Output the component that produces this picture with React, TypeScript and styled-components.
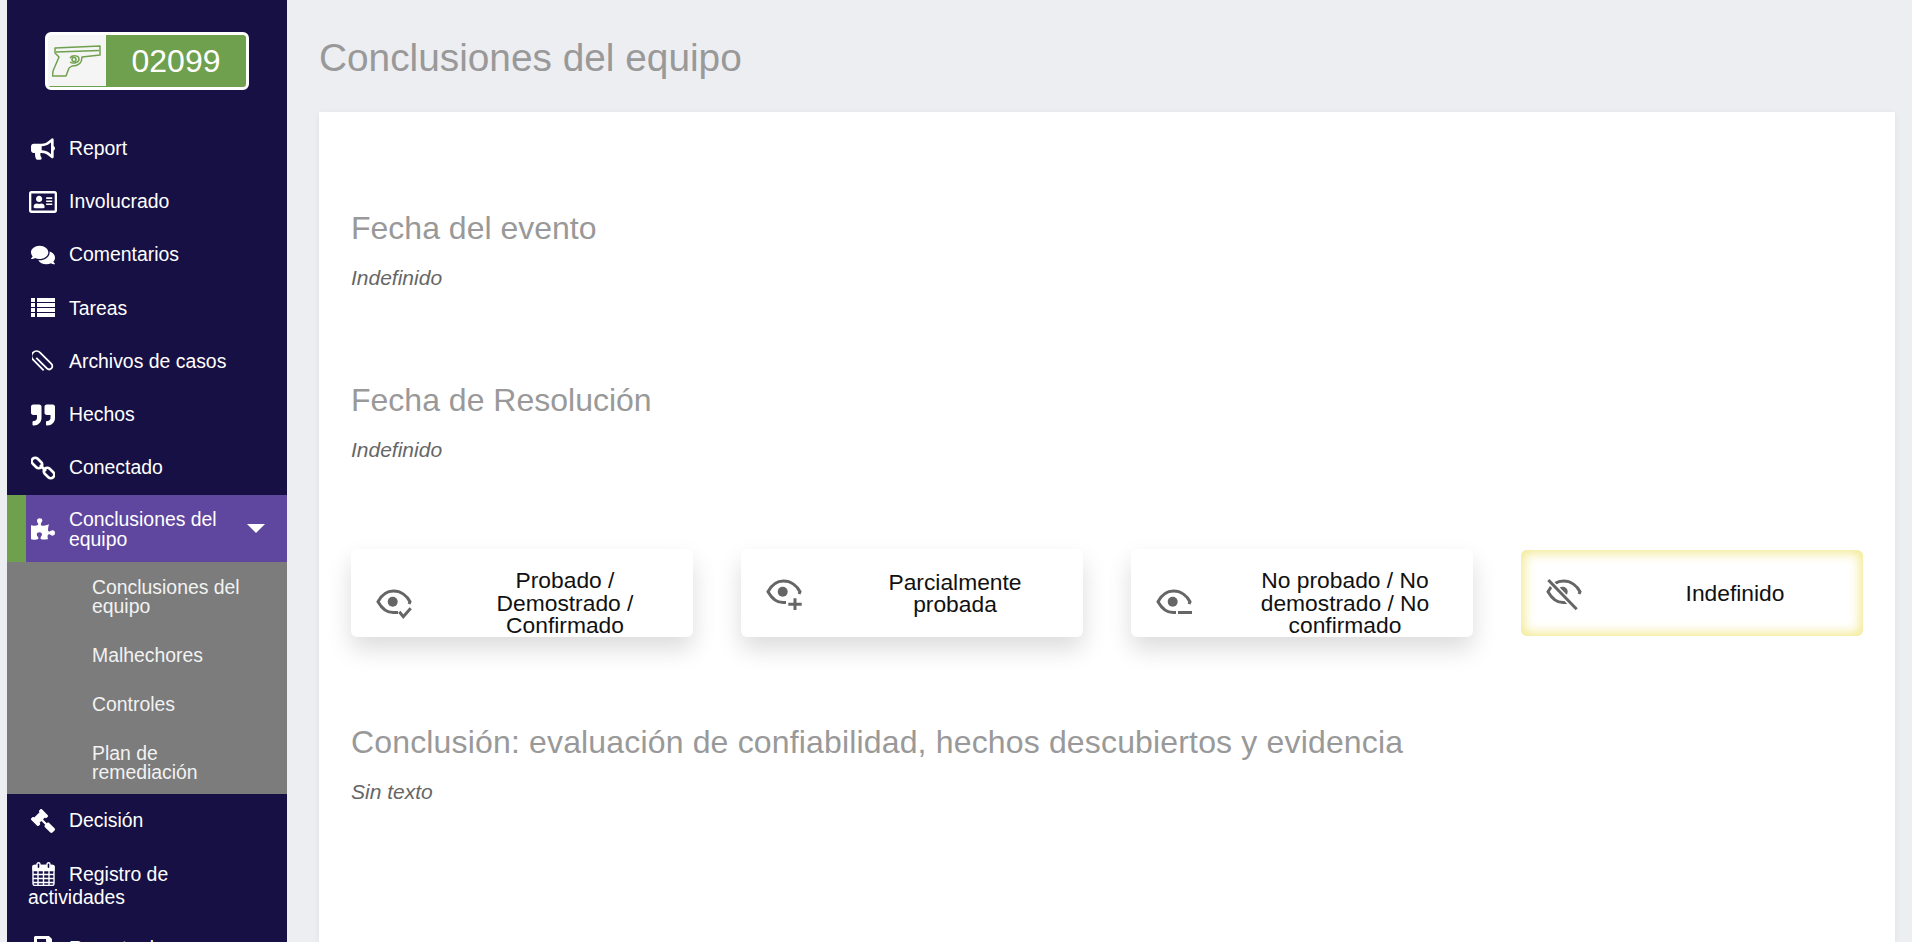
import React from "react";
import styled, { createGlobalStyle } from "styled-components";
import { FaBullhorn, FaRegAddressCard, FaComments, FaQuoteRight, FaPuzzlePiece, FaGavel, FaPrint } from "react-icons/fa";

const Global = createGlobalStyle`
  html, body { margin: 0; padding: 0; height: 942px; overflow: hidden; background: #edeef2; }
  * { box-sizing: border-box; }
  body { font-family: "Liberation Sans", Arial, sans-serif; }
`;

const Page = styled.div`
  display: flex;
  height: 942px;
  overflow: hidden;
  padding-left: 7px;
  background: #edeef2;
`;
const Sidebar = styled.nav`
  flex: 0 0 280px;
  height: 942px;
  overflow: hidden;
  background: #171044;
  padding-top: 32px;
`;
const Badge = styled.div`
  display: flex;
  width: 204px;
  height: 58px;
  margin: 0 0 32px 38px;
  border: 3px solid #fff;
  border-radius: 6px;
  overflow: hidden;
  background: #f5f5f5;
`;
const BadgeGun = styled.div`
  flex: 0 0 58px;
  display: flex;
  align-items: center;
  justify-content: center;
  border-bottom: 1px solid #6fa04e;
`;
const BadgeNum = styled.div`
  flex: 1;
  background: #6fa04e;
  color: #fff;
  font-size: 32px;
  display: flex;
  align-items: center;
  justify-content: center;
`;
const Item = styled.div`
  display: flex;
  align-items: center;
  height: 53.2px;
  padding-left: 21px;
  color: #fff;
  font-size: 19.4px;
`;
const IconSlot = styled.span`
  flex: 0 0 41px;
  display: flex;
`;
const IconBox = styled.span<{ $flip?: boolean }>`
  width: 30px;
  display: flex;
  justify-content: center;
  align-items: center;
  font-size: 24px;
  transform: ${(p) => (p.$flip ? "scaleX(-1)" : "none")};
`;
const ActiveItem = styled.div`
  display: flex;
  align-items: center;
  height: 67px;
  margin-top: 1px;
  background: #5f469f;
  border-left: 19px solid #6fa04e;
  padding-left: 2px;
  color: #fff;
  font-size: 19.4px;
  line-height: 20px;
`;
const ActiveLabel = styled.span`
  flex: 1;
  padding-right: 20px;
`;
const Caret = styled.span`
  width: 0;
  height: 0;
  border-left: 9px solid transparent;
  border-right: 9px solid transparent;
  border-top: 9px solid #fff;
  margin-right: 22px;
`;
const SubMenu = styled.div`
  background: #7c7c7c;
  height: 232px;
  padding: 16px 40px 0 85px;
  display: flex;
  flex-direction: column;
  gap: 30px;
  color: #f2f2f2;
  font-size: 19.4px;
  line-height: 19px;
`;
const SubItem = styled.div``;
const WrapItem = styled.div`
  padding: 14px 60px 0 21px;
  color: #fff;
  font-size: 19.4px;
  line-height: 22px;
  height: 74px;
`;
const InlineIcon = styled.span`
  display: inline-block;
  width: 41px;
  vertical-align: -5px;
`;
const Main = styled.main`
  flex: 1;
  padding: 0 17px 0 32px;
  min-width: 0;
`;
const Title = styled.h1`
  margin: 0;
  height: 112px;
  padding-top: 36px;
  font-size: 38.8px;
  line-height: 44px;
  font-weight: 400;
  color: #999;
`;
const Card = styled.section`
  background: #fff;
  height: 830px;
  padding: 97px 32px 0;
  box-shadow: 0 1px 6px rgba(0,0,0,.06);
`;
const Heading = styled.h2`
  margin: 0;
  font-size: 32px;
  line-height: 38px;
  font-weight: 400;
  color: #999;
`;
const LongHeading = styled(Heading)`
  letter-spacing: 0.16px;
`;
const Note = styled.p`
  margin: 18px 0 0;
  font-size: 21px;
  line-height: 26px;
  font-style: italic;
  color: #666;
`;
const Block = styled.div`
  height: 172px;
`;
const Choices = styled.div`
  display: grid;
  grid-template-columns: repeat(4, 1fr);
  gap: 48px;
  margin-top: -4px;
  margin-bottom: 86px;
`;
const Choice = styled.div<{ $tall?: boolean; $active?: boolean }>`
  height: ${(p) => (p.$active ? "86px" : "88px")};
  margin: ${(p) => (p.$active ? "1px 0" : "0")};
  border-radius: 6px;
  background: #fff;
  display: flex;
  align-items: center;
  padding-top: ${(p) => (p.$tall ? "20px" : "0")};
  overflow: ${(p) => (p.$tall ? "visible" : "hidden")};
  box-shadow: ${(p) => (p.$active ? "inset 0 0 12px 3px #f2e98e" : "0 12px 24px rgba(0,0,0,.14)")};
`;
const ChoiceIcon = styled.span`
  flex: 0 0 86px;
  display: flex;
  padding-left: 25px;
`;
const ChoiceText = styled.span`
  flex: 1;
  padding: 0 30px;
  text-align: center;
  font-size: 22.8px;
  line-height: 22.5px;
  color: #111;
`;

const Eye = ({ children, tail = 22 }: { children?: React.ReactNode; tail?: number }) => (
  <svg width="36" height="30" viewBox="0 0 36 30" fill="none" stroke="#666" strokeWidth="3" style={{ overflow: "visible" }}>
    <path d={`M${tail} 24.5 H17 C10 24.5 5 19 2 13.7 C5 8 10 3 17.5 3 C25 3 31 8 34 13.7 L33 16`} />
    <circle cx="16.7" cy="13.7" r="5" fill="#666" stroke="none" />
    {children}
  </svg>
);

const Gun = () => (
  <svg width="50" height="32" viewBox="0 0 50 32" fill="none" stroke="#6fa04e" strokeWidth="1.5" strokeLinejoin="round">
    <path d="M3 3 L48 1 V10 L30 12 C30 18 26 21 20 21 L17 23 L14 31 L0.5 31 L1 26 L7 12 L3 8 Z" />
    <path d="M4 7 L47 5.5 M18 13 C20 10 27 10 27 14 C27 18 21 19 18 17" />
    <circle cx="22" cy="14.5" r="2" />
  </svg>
);

const ListIcon = () => (
  <svg width="24" height="20" viewBox="0 0 24 20" fill="#fff">
    {[0, 5, 10, 15].map((y) => (
      <g key={y}>
        <rect x="0" y={y} width="4" height="4" />
        <rect x="6" y={y} width="18" height="4" />
      </g>
    ))}
  </svg>
);
const ClipIcon = () => (
  <svg width="22" height="22" viewBox="0 0 22 22" fill="none" stroke="#fff" strokeWidth="1.8">
    <path transform="rotate(-45 11 11)" d="M8.5 4 V19 a3.2 3.2 0 0 0 6.4 0 V3 a5 5 0 0 0 -10 0 V18" />
  </svg>
);
const LinkIcon = () => (
  <svg width="24" height="24" viewBox="0 0 24 24" fill="none" stroke="#fff" strokeWidth="2.6">
    <rect x="2.5" y="1" width="7" height="12" rx="3.5" transform="rotate(-45 6 7)" />
    <rect x="14.5" y="11" width="7" height="12" rx="3.5" transform="rotate(-45 18 17)" />
    <path d="M9 9 L15 15" />
  </svg>
);
const CalendarIcon = () => (
  <svg width="23" height="24" viewBox="0 0 23 24" fill="none" stroke="#fff" strokeWidth="1.4">
    <rect x="1" y="3.5" width="21" height="20" rx="2" />
    <rect x="1" y="3.5" width="21" height="5" rx="1" fill="#fff" />
    <path d="M1 12.5 H22 M1 16.5 H22 M1 20.5 H22 M6 9 V23 M11.5 9 V23 M17 9 V23" />
    <rect x="5" y="0.7" width="3" height="6" rx="1.5" fill="#171044" stroke="#fff" />
    <rect x="15" y="0.7" width="3" height="6" rx="1.5" fill="#171044" stroke="#fff" />
  </svg>
);

const items: [string, React.ReactNode][] = [
  ["Report", <FaBullhorn />],
  ["Involucrado", <FaRegAddressCard size={28} />],
  ["Comentarios", <FaComments />],
  ["Tareas", <ListIcon />],
  ["Archivos de casos", <ClipIcon />],
  ["Hechos", <FaQuoteRight />],
  ["Conectado", <LinkIcon />],
];

export default function App() {
  return (
    <Page>
      <Global />
      <Sidebar>
        <Badge>
          <BadgeGun><Gun /></BadgeGun>
          <BadgeNum>02099</BadgeNum>
        </Badge>
        {items.map(([label, icon]) => (
          <Item key={label}><IconSlot><IconBox>{icon}</IconBox></IconSlot>{label}</Item>
        ))}
        <ActiveItem>
          <IconSlot><IconBox><FaPuzzlePiece /></IconBox></IconSlot>
          <ActiveLabel>Conclusiones del equipo</ActiveLabel>
          <Caret />
        </ActiveItem>
        <SubMenu>
          <SubItem>Conclusiones del equipo</SubItem>
          <SubItem>Malhechores</SubItem>
          <SubItem>Controles</SubItem>
          <SubItem>Plan de remediación</SubItem>
        </SubMenu>
        <Item><IconSlot><IconBox $flip><FaGavel /></IconBox></IconSlot>Decisión</Item>
        <WrapItem><InlineIcon><IconBox><CalendarIcon /></IconBox></InlineIcon>Registro de actividades</WrapItem>
        <Item><IconSlot><IconBox><FaPrint /></IconBox></IconSlot>Reporte de un caso</Item>
      </Sidebar>
      <Main>
        <Title>Conclusiones del equipo</Title>
        <Card>
          <Block>
            <Heading>Fecha del evento</Heading>
            <Note>Indefinido</Note>
          </Block>
          <Block>
            <Heading>Fecha de Resolución</Heading>
            <Note>Indefinido</Note>
          </Block>
          <Choices>
            <Choice $tall>
              <ChoiceIcon><Eye><path d="M23.3 23.7 L27.3 28.7 L34.7 20.3" /></Eye></ChoiceIcon>
              <ChoiceText>Probado / Demostrado / Confirmado</ChoiceText>
            </Choice>
            <Choice>
              <ChoiceIcon><Eye tail={20}><path d="M29 20.3 V32 M22.3 26.3 H35.7" /></Eye></ChoiceIcon>
              <ChoiceText>Parcialmente probada</ChoiceText>
            </Choice>
            <Choice $tall>
              <ChoiceIcon><Eye tail={20}><path d="M22 24.5 H36" /></Eye></ChoiceIcon>
              <ChoiceText>No probado / No demostrado / No confirmado</ChoiceText>
            </Choice>
            <Choice $active>
              <ChoiceIcon>
                <Eye>
                  <path d="M2.3 2 L30.7 31.3" stroke="#fff" strokeWidth="6" />
                  <path d="M2.3 2 L30.7 31.3" />
                </Eye>
              </ChoiceIcon>
              <ChoiceText>Indefinido</ChoiceText>
            </Choice>
          </Choices>
          <LongHeading>Conclusión: evaluación de confiabilidad, hechos descubiertos y evidencia</LongHeading>
          <Note>Sin texto</Note>
        </Card>
      </Main>
    </Page>
  );
}
